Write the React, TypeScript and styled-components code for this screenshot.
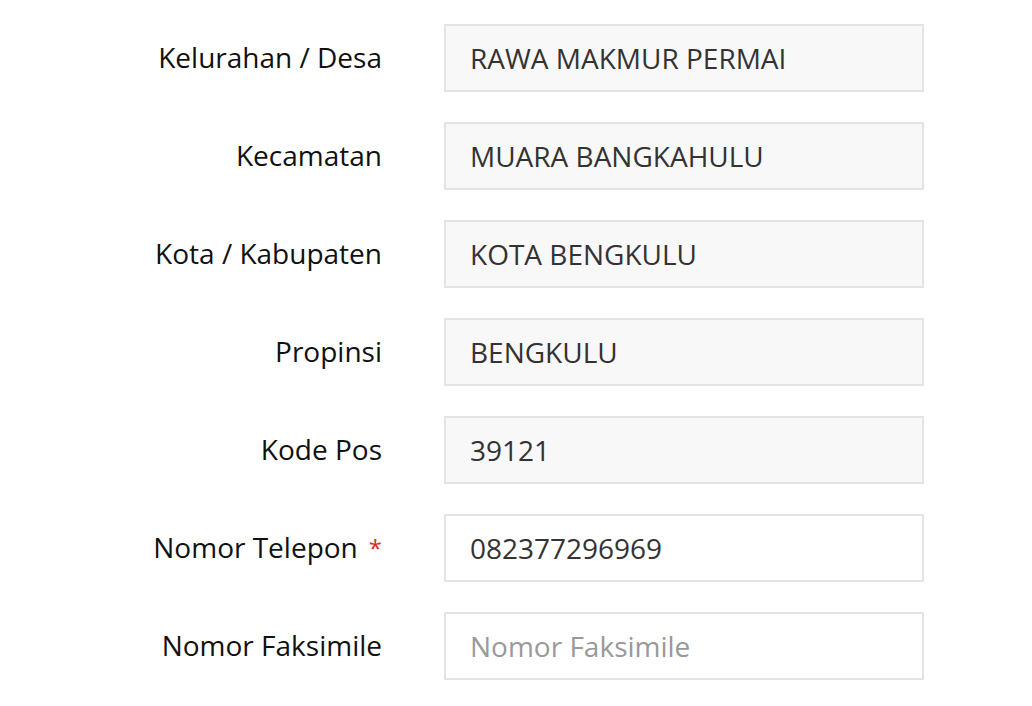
import React from "react";
import styled, { createGlobalStyle } from "styled-components";

const Global = createGlobalStyle`
  html, body { margin: 0; padding: 0; background: #fff; }
  body { font-family: "Open Sans", "Noto Sans", sans-serif; }
  * { box-sizing: border-box; }
`;

const Form = styled.form`
  display: grid;
  grid-template-columns: 382px 480px;
  column-gap: 62px;
  row-gap: 30px;
  padding-top: 24px;
`;

const Label = styled.label`
  display: flex;
  align-items: center;
  justify-content: flex-end;
  height: 68px;
  padding-bottom: 3px;
  font-size: 28px;
  color: #111;
  white-space: nowrap;
`;

const Required = styled.span`
  color: #e5262a;
  font-size: 24px;
  margin-left: 11px;
  margin-top: 2px;
`;

const Input = styled.input<{ $readOnly?: boolean }>`
  width: 480px;
  height: 68px;
  border: 2px solid #e4e4e4;
  background: ${(p) => (p.$readOnly ? "#f8f8f8" : "#fff")};
  padding: 0 22px 0 24px;
  font-family: "Open Sans", "Noto Sans", sans-serif;
  font-size: 28px;
  color: #333;
  outline: none;
  margin: 0;
  &::placeholder { color: #999; opacity: 1; }
`;

const fields: { label: string; value?: string; placeholder?: string; readOnly?: boolean; required?: boolean }[] = [
  { label: "Kelurahan / Desa", value: "RAWA MAKMUR PERMAI", readOnly: true },
  { label: "Kecamatan", value: "MUARA BANGKAHULU", readOnly: true },
  { label: "Kota / Kabupaten", value: "KOTA BENGKULU", readOnly: true },
  { label: "Propinsi", value: "BENGKULU", readOnly: true },
  { label: "Kode Pos", value: "39121", readOnly: true },
  { label: "Nomor Telepon", value: "082377296969", required: true },
  { label: "Nomor Faksimile", placeholder: "Nomor Faksimile" },
];

export default function App() {
  return (
    <>
      <Global />
      <Form onSubmit={(e) => e.preventDefault()}>
        {fields.map((f) => (
          <React.Fragment key={f.label}>
            <Label>
              {f.label}
              {f.required && <Required>*</Required>}
            </Label>
            <Input
              $readOnly={f.readOnly}
              readOnly={f.readOnly}
              defaultValue={f.value}
              placeholder={f.placeholder}
            />
          </React.Fragment>
        ))}
      </Form>
    </>
  );
}
